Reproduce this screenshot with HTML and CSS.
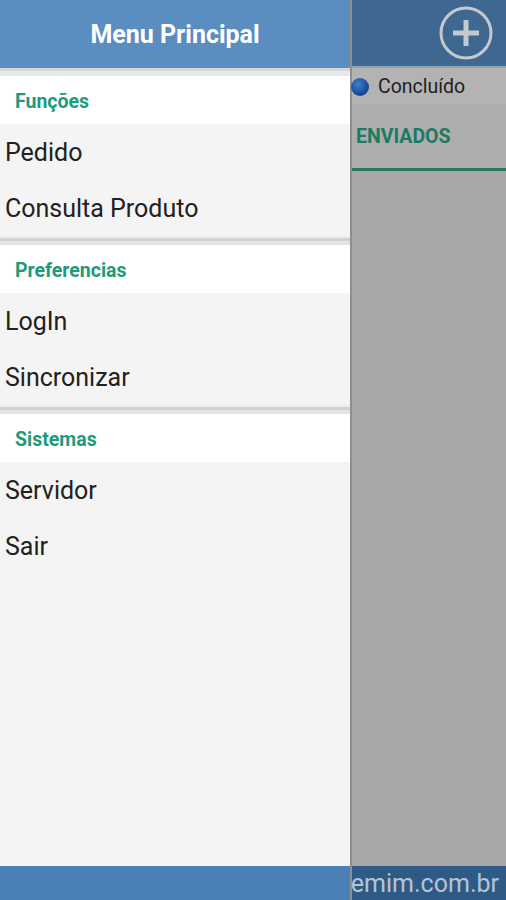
FILE: index.html
```html
<!DOCTYPE html>
<html lang="pt-BR">
<head>
    <meta charset="UTF-8">
    <meta name="viewport" content="width=device-width, initial-scale=1.0">
    <title>Menu Principal</title>
    <link rel="stylesheet" href="styles.css">
</head>
<body>
    <div id="screen">
        <!-- menu lateral -->
        <div id="drawer">
            <div id="drawer-header">Menu Principal</div>
            <div class="separator first"></div>

            <div class="section-title">Funções</div>
            <div class="menu-item">Pedido</div>
            <div class="menu-item">Consulta Produto</div>
            <div class="separator"></div>

            <div class="section-title">Preferencias</div>
            <div class="menu-item">LogIn</div>
            <div class="menu-item">Sincronizar</div>
            <div class="separator"></div>

            <div class="section-title">Sistemas</div>
            <div class="menu-item">Servidor</div>
            <div class="menu-item">Sair</div>

            <div id="drawer-fill"></div>
            <div id="drawer-footer"></div>
        </div>

        <!-- tela por tras do menu (escurecida) -->
        <div id="app">
            <div id="app-header">
                <svg class="add-icon" width="56" height="56" viewBox="0 0 56 56">
                    <circle cx="28" cy="28" r="25" fill="none" stroke="#c3c9cf" stroke-width="3"/>
                    <path d="M28 15 V41 M15 28 H41" stroke="#c3c9cf" stroke-width="5" fill="none"/>
                </svg>
            </div>
            <div id="status-row">
                <span class="status-dot"></span>
                <span class="status-label">Concluído</span>
            </div>
            <div id="tab-row">
                <span class="tab-label">ENVIADOS</span>
            </div>
            <div id="app-body"></div>
            <div id="app-footer">emim.com.br</div>
        </div>
    </div>
</body>
</html>
```

FILE: styles.css
```css
body {
    margin: 0;
    font-family: Roboto, "Liberation Sans", sans-serif;
}

#screen {
    display: flex;
    width: 506px;
    height: 900px;
    overflow: hidden;
}

/* ---- menu ---- */
#drawer {
    display: flex;
    flex-direction: column;
    width: 350px;
    flex-shrink: 0;
    background: #f4f4f4;
    border-right: 2px solid #8f8f8f;
}

#drawer-header {
    height: 68px;
    display: flex;
    align-items: center;
    justify-content: center;
    background: #5a8ec1;
    color: #fff;
    font-size: 25px;
    font-weight: bold;
}

.separator {
    height: 9px;
    background: linear-gradient(#ececec 0, #ececec 2px, #d2d2d2 2px, #d2d2d2 5px, #e4e4e4 5px);
}
.separator.first {
    height: 8px;
    background: linear-gradient(#d6d6d6 0, #d6d6d6 3px, #e8e8e8 3px);
}

.section-title {
    height: 48px;
    display: flex;
    align-items: center;
    padding-left: 15px;
    padding-top: 3px;
    box-sizing: border-box;
    background: #fff;
    color: #1f9a7c;
    font-size: 19.5px;
    font-weight: bold;
}

.menu-item {
    height: 56px;
    display: flex;
    align-items: center;
    padding-left: 5px;
    padding-top: 1px;
    box-sizing: border-box;
    color: #212121;
    font-size: 25px;
}

#drawer-fill {
    flex-grow: 1;
}

#drawer-footer {
    height: 34px;
    background: #4a80b6;
}

/* ---- tela de fundo ---- */
#app {
    display: flex;
    flex-direction: column;
    flex-grow: 1;
    min-width: 0;
    background: #a9a9a9;
}

#app-header {
    height: 68px;
    display: flex;
    align-items: center;
    justify-content: flex-end;
    padding-right: 12px;
    background: #3e6890;
    border-bottom: 2px solid #8fa3b8;
    box-sizing: border-box;
}

#status-row {
    height: 36px;
    display: flex;
    align-items: center;
    gap: 9px;
    padding-top: 1px;
    box-sizing: border-box;
    background: #b3b3b3;
}

.status-dot {
    width: 18px;
    height: 18px;
    margin-left: -1px;
    border-radius: 50%;
    background: radial-gradient(circle at 40% 35%, #3f7fd0, #184c9a 60%, #0f346f);
    flex-shrink: 0;
}

.status-label {
    font-size: 19.5px;
    color: #1e1e1e;
}

#tab-row {
    height: 67px;
    display: flex;
    align-items: center;
    padding-left: 4px;
    box-sizing: border-box;
    background: #adadad;
    border-bottom: 3px solid #2f7464;
}

.tab-label {
    color: #1d7a62;
    font-size: 19.5px;
    font-weight: bold;
}

#app-body {
    flex-grow: 1;
    background: #a8a8a8;
}

#app-footer {
    height: 34px;
    display: flex;
    align-items: center;
    justify-content: flex-end;
    padding-right: 7px;
    background: #2e5b86;
    color: #b6c4d2;
    font-size: 25px;
    white-space: nowrap;
    overflow: hidden;
}
```
